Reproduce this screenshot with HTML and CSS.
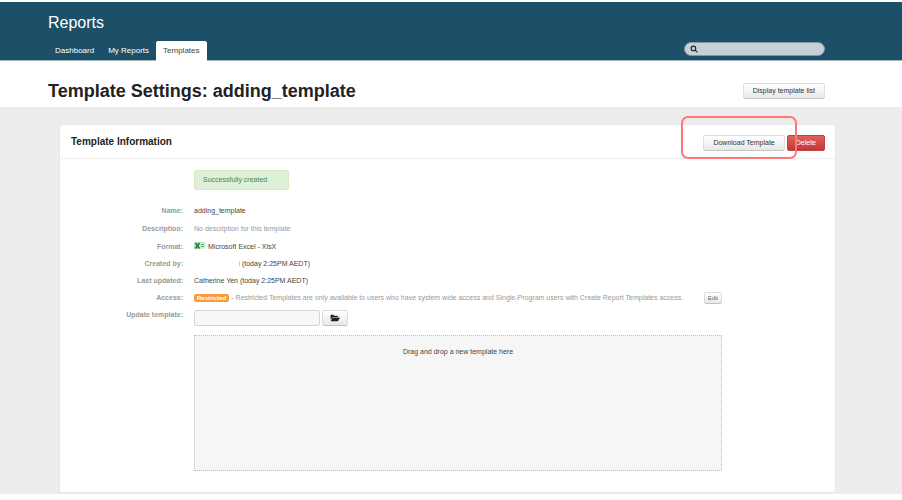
FILE: index.html
```html
<!doctype html>
<html lang="en">
    <head>
        <meta charset="utf-8" />
        <title>Template Settings: adding_template</title>
        <link rel="stylesheet" href="styles.css">
    </head>
    <body>
        <header class="header">
            <div class="brand">Reports</div>
            <div class="header-row">
                <nav class="tabs">
                    <a href="#">Dashboard</a>
                    <a href="#">My Reports</a>
                    <a href="#" class="active">Templates</a>
                </nav>
                <form class="search">
                    <svg viewBox="0 0 14 14" aria-hidden="true">
                        <circle cx="6" cy="6" r="4" />
                        <path d="M9 9l4 4" />
                    </svg>
                    <input type="search" aria-label="Search" />
                </form>
            </div>
        </header>

        <div class="title-bar">
            <h1>Template Settings: adding_template</h1>
            <button class="btn">Display template list</button>
        </div>

        <main class="main">
            <section class="card">
                <div class="card-header">
                    <h2>Template Information</h2>
                    <div class="actions">
                        <button class="btn">Download Template</button>
                        <button class="btn btn-danger">Delete</button>
                        <span class="marker"></span>
                    </div>
                </div>

                <div class="card-body">
                    <div class="alert">Successfully created</div>

                    <dl class="details">
                        <dt>Name:</dt>
                        <dd>adding_template</dd>
                        <dt>Description:</dt>
                        <dd class="muted">No description for this template</dd>
                        <dt>Format:</dt>
                        <dd class="format">
                            <span class="clipped">
                                <svg viewBox="0 0 22 16" aria-hidden="true">
                                    <rect width="22" height="16" rx="1" fill="#b5e0bd" />
                                    <path d="M13 2h8v14h-8z" fill="#dff1e2" />
                                    <path d="M14 5h6M14 9h6" stroke="#51a564" stroke-width="2" />
                                    <path d="M3 2l8 11M11 2l-8 11" stroke="#257a3b" stroke-width="3" />
                                </svg>
                                Microsoft
                            </span>
                            <span>Excel - XlsX</span>
                        </dd>
                        <dt>Created by:</dt>
                        <dd><span class="blank"></span> (today 2:25PM AEDT)</dd>
                        <dt>Last updated:</dt>
                        <dd>Catherine Yen (today 2:25PM AEDT)</dd>
                        <dt>Access:</dt>
                        <dd class="muted access">
                            <span class="label">Restricted</span>
                            <span>- Restricted Templates are only available to users who have system wide access and Single-Program users with Create Report Templates access.</span>
                            <button class="btn btn-mini">Edit</button>
                        </dd>
                        <dt><label for="templateFile">Update template:</label></dt>
                        <dd class="upload">
                            <input type="text" id="templateFile" />
                            <button class="btn btn-icon" aria-label="Browse">
                                <svg viewBox="0 0 18 14" aria-hidden="true">
                                    <path d="M1 10V2q0-1 1-1h4q1 0 1 1v1h6q1 0 1 1v1H6q-1 0-2 1z" />
                                    <path d="M5 6h12q1 0 .5 1L15 12q-.5 1-2 1H2q-1 0-.5-1L4 7q.3-1 1-1z" />
                                </svg>
                            </button>
                        </dd>
                    </dl>

                    <div class="dropzone">Drag and drop a new template here</div>
                </div>
            </section>
        </main>
    </body>
</html>
```
FILE: styles.css
```css
* {
    box-sizing: border-box;
}

body {
    margin: 0;
    padding: 2px 0 6px;
    background: #fff;
    color: #444;
    font-family: "Liberation Sans", Arial, sans-serif;
    font-size: 7px;
    line-height: 10px;
}

button,
input {
    font: inherit;
}

.header {
    padding: 10px 77px 0 48px;
    background: #1c5068;
    border-bottom: 1px solid #a4b8c2;
}

.brand {
    color: #fff;
    font-size: 16px;
    line-height: 22px;
}

.header-row {
    display: flex;
    align-items: flex-end;
    justify-content: space-between;
    margin-top: 7px;
}

.tabs {
    display: flex;
    font-size: 8px;
}

.tabs a {
    padding: 5px 7px 4px;
    border-radius: 2px 2px 0 0;
    color: #fff;
    text-decoration: none;
}

.tabs .active {
    margin-bottom: -1px;
    padding-bottom: 5px;
    background: #fff;
    color: #444;
}

.search {
    display: flex;
    align-items: center;
    width: 141px;
    height: 14px;
    margin-bottom: 4px;
    padding: 0 5px;
    border: 1px solid #8296a2;
    border-radius: 7px;
    background: #c8d0d7;
}

.search svg {
    width: 8px;
    height: 8px;
    fill: none;
    stroke: #222;
    stroke-width: 2;
}

.search input {
    flex: 1;
    min-width: 0;
    height: 10px;
    border: 0;
    outline: 0;
    background: transparent;
}

.title-bar {
    display: flex;
    align-items: center;
    justify-content: space-between;
    height: 46px;
    padding: 14px 77px 0 48px;
}

h1 {
    margin: 0;
    color: #222;
    font-size: 18px;
    line-height: 32px;
}

h2 {
    margin: 0;
    color: #222;
    font-size: 10px;
    line-height: 14px;
}

.btn {
    height: 16px;
    padding: 0 9px;
    border: 1px solid #ddd;
    border-bottom-color: #c4c4c4;
    border-radius: 2px;
    background: linear-gradient(#fff, #e8e8e8);
    color: #333;
    line-height: 14px;
}

.btn-danger {
    padding: 0 8px;
    border-color: #bd4240;
    background: linear-gradient(#e0605c, #be3a36);
    color: #fff;
}

.btn-icon {
    padding: 0 7px;
}

.btn-mini {
    height: 12px;
    margin-left: auto;
    padding: 0 3px;
    color: #666;
    font-size: 6px;
    line-height: 10px;
}

.main {
    padding: 18px 67px 2px 60px;
    background: #ededed;
}

.card {
    border-radius: 2px;
    background: #fff;
    box-shadow: 0 0 1px #ccc;
}

.card-header {
    display: flex;
    align-items: center;
    justify-content: space-between;
    height: 34px;
    padding: 0 10px 0 11px;
    border-bottom: 1px dotted #ddd;
}

.actions {
    position: relative;
    display: flex;
    gap: 2px;
    padding-top: 3px;
}

/* Outline drawn over the download button */
.marker {
    position: absolute;
    top: -16px;
    right: 28px;
    width: 116px;
    height: 43px;
    border: 2px solid #f77;
    border-radius: 7px;
    pointer-events: none;
}

.card-body {
    padding: 11px 113px 21px 134px;
}

.alert {
    width: 95px;
    padding: 4px 8px;
    border: 1px solid #d6e9c6;
    border-radius: 2px;
    background: #dff0d8;
    color: #468847;
}

.details {
    display: grid;
    grid-template-columns: auto 1fr;
    grid-template-rows: 11px 11px;
    row-gap: 7px;
    column-gap: 11px;
    margin: 16px 0 9px -124px;
}

.details dt {
    width: 113px;
    color: #999;
    font-weight: bold;
    text-align: right;
}

.details dd {
    margin: 0;
    white-space: nowrap;
}

.details .muted {
    color: #999;
}

.format {
    display: flex;
    gap: 2px;
}

.clipped {
    display: flex;
    gap: 3px;
    height: 7px;
    overflow: hidden;
}

.format svg {
    width: 11px;
    height: 8px;
}

.blank {
    display: inline-block;
    width: 46px;
    height: 5px;
    border-right: 1px solid #ccc;
}

.access {
    display: flex;
    align-items: center;
    gap: 2px;
    height: 10px;
}

.label {
    padding: 0 3px;
    border-radius: 2px;
    background: #f89b3c;
    color: #fff;
    font-size: 6px;
    font-weight: bold;
    line-height: 8px;
}

.upload {
    display: flex;
    gap: 2px;
}

.upload input {
    width: 126px;
    height: 16px;
    border: 1px solid #d4d4d4;
    border-radius: 2px;
    background: #f7f7f7;
}

.upload svg {
    display: block;
    width: 10px;
    height: 8px;
    fill: #222;
}

.dropzone {
    height: 136px;
    padding: 11px;
    border: 1px dotted #bbb;
    background: #f6f6f6;
    text-align: center;
}
```
